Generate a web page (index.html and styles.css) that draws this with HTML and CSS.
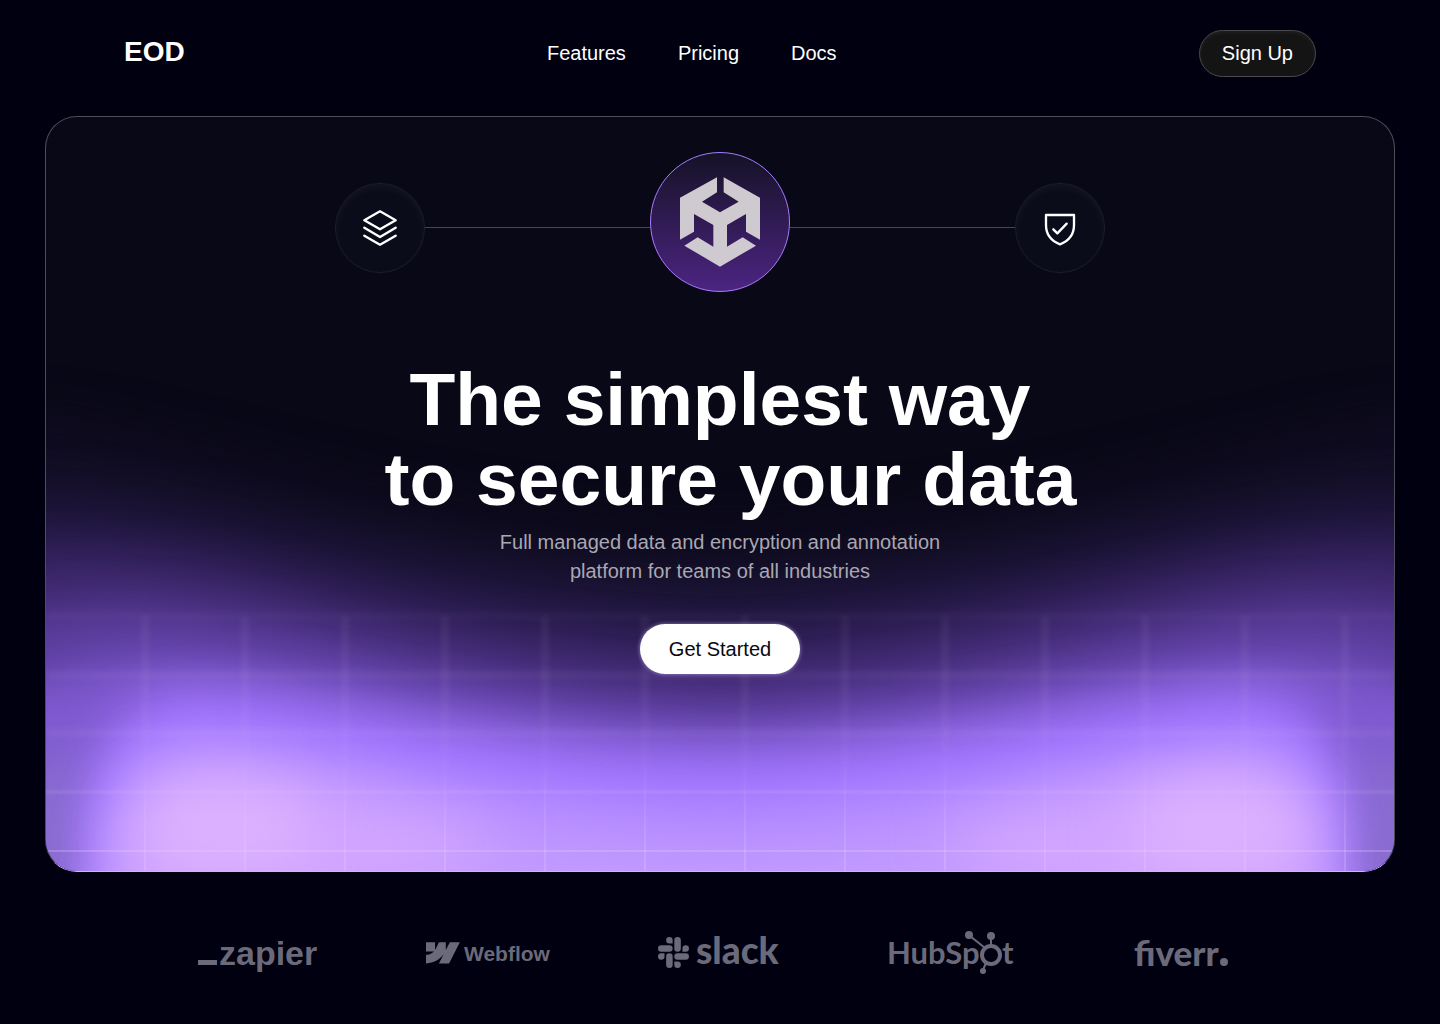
FILE: index.html
```html
<!DOCTYPE html>
<html lang="en">
<head>
<meta charset="utf-8">
<meta name="viewport" content="width=device-width, initial-scale=1">
<title>EOD</title>
<link rel="stylesheet" href="styles.css">
</head>
<body>
<header class="header">
  <a class="brand" href="#">EOD</a>
  <nav class="nav">
    <a href="#features">Features</a>
    <a href="#pricing">Pricing</a>
    <a href="#docs">Docs</a>
  </nav>
  <button class="signup" type="button">Sign Up</button>
</header>

<main>
  <section class="hero">
    <svg class="hero-glow" viewBox="46 117 1348 754" preserveAspectRatio="none" aria-hidden="true">
      <defs>
        <filter id="soft" filterUnits="userSpaceOnUse" x="-300" y="0" width="2040" height="1300" color-interpolation-filters="sRGB"><feGaussianBlur stdDeviation="28"/></filter>
        <filter id="mid" filterUnits="userSpaceOnUse" x="-300" y="0" width="2040" height="1300" color-interpolation-filters="sRGB"><feGaussianBlur stdDeviation="22"/></filter>
        <filter id="line5" filterUnits="userSpaceOnUse" x="0" y="560" width="1440" height="340"><feGaussianBlur stdDeviation="3"/></filter>
        <filter id="line2" filterUnits="userSpaceOnUse" x="0" y="560" width="1440" height="340"><feGaussianBlur stdDeviation="1"/></filter>
        <linearGradient id="fadeUp" gradientUnits="userSpaceOnUse" x1="0" y1="612" x2="0" y2="850">
          <stop offset="0" stop-color="#fff"/><stop offset=".3" stop-color="#fff"/><stop offset="1" stop-color="#000"/>
        </linearGradient>
        <linearGradient id="fadeDown" gradientUnits="userSpaceOnUse" x1="0" y1="760" x2="0" y2="860">
          <stop offset="0" stop-color="#000"/><stop offset="1" stop-color="#fff"/>
        </linearGradient>
        <mask id="upper" maskUnits="userSpaceOnUse" x="0" y="600" width="1440" height="280"><rect x="0" y="600" width="1440" height="280" fill="url(#fadeUp)"/></mask>
        <mask id="lower" maskUnits="userSpaceOnUse" x="0" y="600" width="1440" height="280"><rect x="0" y="600" width="1440" height="280" fill="url(#fadeDown)"/></mask>
        <path id="columns" d="M145 616V872M245 616V872M345 616V872M445 616V872M545 616V872M645 616V872M745 616V872M845 616V872M945 616V872M1045 616V872M1145 616V872M1245 616V872M1345 616V872"/>
      </defs>
      <g filter="url(#soft)">
        <path fill="#120e24" d="M-150 430H46C200 450 400 535 720 540C1040 535 1240 450 1394 430H1590V1100H-150Z"/>
      </g>
      <g filter="url(#soft)">
        <path fill="#251a49" d="M-150 505H46C220 505 400 586 720 596C1040 586 1220 505 1394 505H1590V1100H-150Z"/>
      </g>
      <g filter="url(#mid)">
        <path fill="#3f286e" d="M-150 556H46C240 545 380 634 720 649C1040 634 1200 545 1394 556H1590V1100H-150Z"/>
      </g>
      <g filter="url(#mid)">
        <path fill="#5c3e9f" d="M-150 612H46C230 580 400 682 720 694C1040 682 1210 580 1394 612H1590V1100H-150Z"/>
      </g>
      <g filter="url(#mid)">
        <path fill="#7f5ad0" d="M-150 680H46C210 620 400 718 720 730C1040 718 1230 620 1394 680H1590V1100H-150Z"/>
      </g>
      <g filter="url(#soft)">
        <path fill="#8a6cd0" d="M-150 760H150V1100H-150ZM1290 760H1590V1100H1290Z"/>
      </g>
      <g filter="url(#mid)">
        <path fill="#a276ff" d="M84 1100V810C94 735 130 692 200 692C330 697 480 754 720 756C960 754 1110 697 1240 692C1310 692 1340 735 1350 810V1100Z"/>
      </g>
      <g filter="url(#mid)">
        <path fill="#b388ff" d="M100 1100V840C114 765 142 738 200 738C330 743 480 796 720 802C960 796 1110 743 1240 738C1298 738 1324 775 1334 840V1100Z"/>
      </g>
      <g filter="url(#soft)">
        <path fill="#c29aff" d="M110 1100V850C126 785 150 758 205 758C330 766 480 836 720 842C960 836 1110 766 1235 758C1288 758 1314 795 1324 850V1100Z"/>
      </g>
      <g filter="url(#soft)">
        <path fill="#d2a5ff" d="M128 1000L132 850C140 800 165 778 205 780C300 790 400 808 500 840C460 880 400 890 340 900L300 1000Z"/>
        <path fill="#d2a5ff" d="M1312 1000L1308 850C1300 800 1275 778 1235 780C1140 790 1040 808 940 840C980 880 1040 890 1100 900L1140 1000Z"/>
      </g>
      <g filter="url(#soft)" fill="#ddb3ff">
        <ellipse cx="225" cy="828" rx="88" ry="40"/>
        <ellipse cx="1217" cy="828" rx="88" ry="40"/>
      </g>
      <g fill="none" stroke="#ead6ff">
        <g mask="url(#upper)"><use href="#columns" filter="url(#line5)" stroke-width="6" opacity=".08"/></g>
        <g mask="url(#lower)"><use href="#columns" stroke-width="2" opacity=".22"/></g>
        <path filter="url(#line5)" stroke-width="6" opacity=".04" d="M46 616H1394"/>
        <path filter="url(#line5)" stroke-width="6" opacity=".07" d="M46 675H1394"/>
        <path filter="url(#line5)" stroke-width="5" opacity=".09" d="M46 733H1394"/>
        <path filter="url(#line2)" stroke-width="3" opacity=".13" d="M46 792H1394"/>
        <path stroke-width="2" opacity=".25" d="M46 851H1394"/>
      </g>
    </svg>

    <div class="chain">
      <span class="node">
        <svg width="34" height="36" viewBox="129 210 102 108" fill="none" stroke="#fff" stroke-width="7" stroke-linejoin="round" stroke-linecap="round" aria-hidden="true">
          <path d="M180 214L227 241L180 268L133 241ZM133 263L180 291L227 263M133 287L180 314L227 287"/>
        </svg>
      </span>
      <span class="link"></span>
      <span class="core">
        <svg width="80" height="90" viewBox="1080 112 240 270" fill="#cfc9d0" aria-hidden="true">
          <path d="M1191 113V158L1146 186L1200 218L1256 186L1211 158V113L1320 174V300L1278 276V223L1221 256V321L1268 293L1308 318L1200 381L1093 318L1133 293L1180 321V256L1122 223V276L1080 300V174Z"/>
        </svg>
      </span>
      <span class="link"></span>
      <span class="node">
        <svg width="32" height="36" viewBox="129 120 96 108" fill="none" stroke="#fff" stroke-width="7" stroke-linejoin="round" stroke-linecap="round" aria-hidden="true">
          <path d="M135 135H219V165C219 195 205 212 177 223C149 212 135 195 135 165ZM157 178L169 190L197 161"/>
        </svg>
      </span>
    </div>

    <h1>The simplest way<br>&nbsp;to secure your data</h1>
    <p class="lead">Full managed data and encryption and annotation<br>platform for teams of all industries</p>
    <button class="cta" type="button">Get Started</button>
  </section>

  <section class="logos" aria-label="Trusted by">
    <svg width="122" height="44" viewBox="196 931 122 44" role="img" aria-label="Zapier">
      <rect x="197" y="960" width="19" height="5"/>
      <text class="logo-grotesk" x="218" y="965" font-size="34">zapier</text>
    </svg>
    <svg width="128" height="44" viewBox="426 931 128 44" role="img" aria-label="Webflow">
      <path transform="translate(427 936) scale(1.41)" d="m24 4.515-7.658 14.97H9.149l3.205-6.204h-.144C9.566 16.713 5.621 18.973 0 19.485v-6.118s3.596-.213 5.71-2.435H0V4.515h6.417v5.278l.144-.001 2.622-5.277h4.854v5.244h.144l2.72-5.244H24Z"/>
      <text class="logo-grotesk" x="465" y="961" font-size="21">Webflow</text>
    </svg>
    <svg width="128" height="60" viewBox="656 923 128 60" role="img" aria-label="Slack">
      <path transform="translate(658 937) scale(1.29)" d="M5.042 15.165a2.528 2.528 0 0 1-2.52 2.523A2.528 2.528 0 0 1 0 15.165a2.527 2.527 0 0 1 2.522-2.52h2.52v2.52zM6.313 15.165a2.527 2.527 0 0 1 2.521-2.52 2.527 2.527 0 0 1 2.521 2.52v6.313A2.528 2.528 0 0 1 8.834 24a2.528 2.528 0 0 1-2.521-2.522v-6.313zM8.834 5.042a2.528 2.528 0 0 1-2.521-2.52A2.528 2.528 0 0 1 8.834 0a2.528 2.528 0 0 1 2.521 2.522v2.52H8.834zM8.834 6.313a2.528 2.528 0 0 1 2.521 2.521 2.528 2.528 0 0 1-2.521 2.521H2.522A2.528 2.528 0 0 1 0 8.834a2.528 2.528 0 0 1 2.522-2.521h6.312zM18.956 8.834a2.528 2.528 0 0 1 2.522-2.521A2.528 2.528 0 0 1 24 8.834a2.528 2.528 0 0 1-2.522 2.521h-2.522V8.834zM17.688 8.834a2.528 2.528 0 0 1-2.523 2.521 2.527 2.527 0 0 1-2.52-2.521V2.522A2.527 2.527 0 0 1 15.165 0a2.528 2.528 0 0 1 2.523 2.522v6.312zM15.165 18.956a2.528 2.528 0 0 1 2.523 2.522A2.528 2.528 0 0 1 15.165 24a2.527 2.527 0 0 1-2.52-2.522v-2.522h2.52zM15.165 17.688a2.527 2.527 0 0 1-2.52-2.523 2.526 2.526 0 0 1 2.52-2.52h6.313A2.527 2.527 0 0 1 24 15.165a2.528 2.528 0 0 1-2.522 2.523h-6.313z"/>
      <text class="logo-round" x="696" y="964" font-size="37">slack</text>
    </svg>
    <svg width="130" height="48" viewBox="885 929 130 48" role="img" aria-label="HubSpot">
      <text class="logo-human" x="886" y="964" font-size="31">HubSp</text>
      <text class="logo-human" x="1001" y="964" font-size="31">t</text>
      <g fill="none" stroke="#6b6a7a">
        <circle cx="990" cy="955" r="9" stroke-width="4"/>
        <path d="M984 948L969 936M990 946V937M985 963L982 970" stroke-width="2"/>
      </g>
      <circle cx="968" cy="935" r="4"/><circle cx="990" cy="936" r="4"/><circle cx="982" cy="971" r="3"/>
    </svg>
    <svg width="98" height="48" viewBox="1132 929 98 48" role="img" aria-label="Fiverr">
      <text class="logo-round" x="1133" y="966" font-size="35">fiverr</text>
      <circle cx="1223" cy="962" r="4"/>
    </svg>
  </section>
</main>
</body>
</html>
```
FILE: styles.css
```css
* { box-sizing: border-box; }

body {
  margin: 0;
  background: #000010;
  color: #fff;
  font-family: "Liberation Sans", Arial, sans-serif;
  font-size: 20px;
}

a { color: inherit; text-decoration: none; }

button {
  font: inherit;
  cursor: pointer;
}

.header {
  display: flex;
  align-items: center;
  justify-content: space-between;
  padding: 30px 124px 0;
}

.brand {
  padding-bottom: 3px;
  font-size: 28px;
  font-weight: 700;
}

.nav {
  display: flex;
  gap: 52px;
}

.signup {
  height: 47px;
  padding: 0 22px;
  border: 1px solid #4a4a4c;
  border-radius: 24px;
  background: #141414;
  box-shadow: inset 0 2px 4px rgba(255, 255, 255, 0.05);
  color: #fff;
}

.hero {
  position: relative;
  display: flex;
  flex-direction: column;
  align-items: center;
  margin: 39px 45px 0;
  padding: 35px 24px 197px;
  border: 1px solid rgba(255, 255, 255, 0.28);
  border-bottom-color: #cdb4ff;
  border-radius: 32px;
  background: #090817;
  overflow: hidden;
  isolation: isolate;
}

.hero-glow {
  position: absolute;
  inset: 0;
  z-index: -1;
  width: 100%;
  height: 100%;
}

.chain {
  display: flex;
  align-items: center;
  width: 100%;
  max-width: 770px;
}

.node,
.core {
  display: flex;
  flex: none;
  align-items: center;
  justify-content: center;
  border-radius: 50%;
}

.node {
  width: 90px;
  height: 90px;
  margin-top: 12px;
  border: 1px solid #1f1e2c;
  background: #0a0c1a;
  box-shadow: inset 0 4px 8px rgba(255, 255, 255, 0.04);
}

.core {
  width: 140px;
  height: 140px;
  border: 1px solid #a67cff;
  background: linear-gradient(#151226, #4c2482);
}

.link {
  flex: 1;
  height: 1px;
  margin-top: 11px;
  background: #46455a;
}

h1 {
  margin: 67px 0 9px;
  font-size: 75px;
  font-weight: 700;
  line-height: 80px;
  text-align: center;
}

.lead {
  margin: 0 0 38px;
  color: #a9a7b1;
  line-height: 29px;
  text-align: center;
}

.cta {
  height: 50px;
  padding: 0 29px;
  border: 0;
  border-radius: 25px;
  background: #fff;
  box-shadow: 0 0 4px rgba(220, 200, 255, 0.6);
  color: #09090f;
}

.logos {
  display: grid;
  grid-template-columns: repeat(auto-fit, minmax(160px, 1fr));
  place-items: center;
  padding: 51px 142px 41px;
}

.logos svg { fill: #6b6a7a; }

.logo-grotesk { font-family: "Liberation Sans", Arial, sans-serif; font-weight: 700; }
.logo-round { font-family: Lato, sans-serif; font-weight: 900; }
.logo-human { font-family: Lato, sans-serif; font-weight: 700; }
```
